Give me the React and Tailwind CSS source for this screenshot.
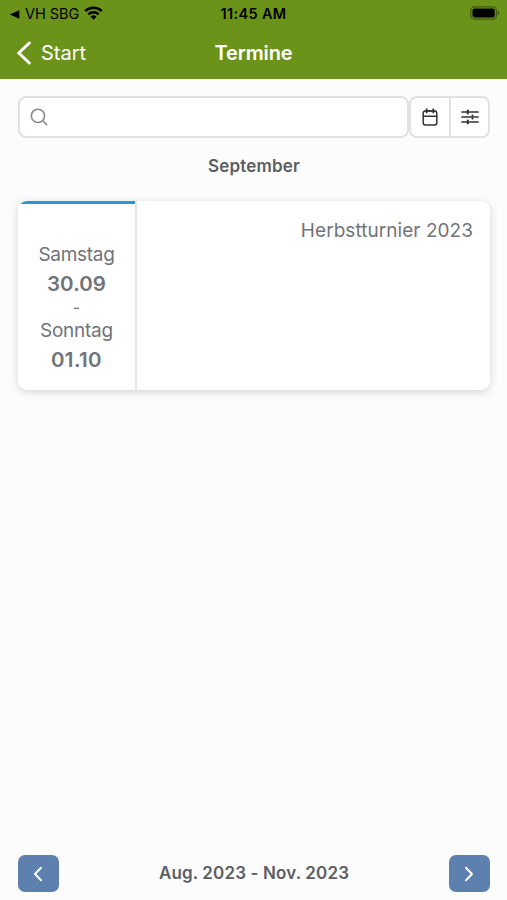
import React, { useState } from "react";

const events = [
  {
    title: "Herbstturnier 2023",
    startDay: "Samstag",
    startDate: "30.09",
    endDay: "Sonntag",
    endDate: "01.10",
  },
];

const StatusBar = () => (
  <div className="grid grid-cols-3 items-center h-7 pl-[9px] pr-[7px] text-sm text-black">
    <div className="flex items-center">
      <svg className="w-[11px] h-[9px]" viewBox="0 0 11 9" fill="currentColor">
        <path d="M10.3 0.3v8.4L0.8 4.5z" />
      </svg>
      <span className="ml-[5px] text-[14.5px] leading-5 tracking-[-0.05px] whitespace-nowrap">VH SBG</span>
      <svg className="ml-[5px] mb-[2px] w-[19px] h-[14px]" viewBox="0 0 19 14" fill="none" stroke="currentColor" strokeWidth="2.5">
        <path d="M1.2 5.2a12 12 0 0 1 16.6 0" />
        <path d="M4.3 8.4a7.5 7.5 0 0 1 10.4 0" />
        <path d="M9.5 13.8l-3-3.1a4.3 4.3 0 0 1 6 0z" fill="currentColor" stroke="none" />
      </svg>
    </div>
    <span className="pr-[2px] text-center text-[14.5px] font-semibold tracking-[0.35px]">11:45 AM</span>
    <svg className="justify-self-end mb-[2px] w-[30px] h-[14px]" viewBox="0 0 30 14">
      <rect x="0.8" y="0.8" width="25.6" height="12.4" rx="3.6" fill="none" stroke="#000" strokeOpacity="0.4" strokeWidth="1.2" />
      <rect x="2.5" y="2.5" width="22.2" height="9" rx="2" fill="#000" />
      <path d="M27.6 4.6c2 0.7 2 4.1 0 4.8z" fill="#000" fillOpacity="0.45" />
    </svg>
  </div>
);

const Header = () => (
  <header className="h-[79px] shrink-0 bg-[#6b931a]">
    <StatusBar />
    <nav className="grid grid-cols-3 items-center h-[49px] px-4 text-xl text-white">
      <button className="flex items-center">
        <svg className="w-4 h-6" viewBox="0 0 16 24" fill="none" stroke="currentColor" strokeWidth="3" strokeLinecap="round" strokeLinejoin="round">
          <path d="M13.3 2L2.8 12l10.5 10" />
        </svg>
        <span className="ml-[9px]">Start</span>
      </button>
      <h1 className="text-center font-semibold tracking-[-0.1px]">Termine</h1>
    </nav>
  </header>
);

const SearchBar = () => {
  const [query, setQuery] = useState("");

  return (
    <div className="flex h-[42px] text-[#303338]">
      <label className="flex flex-1 items-center rounded-lg border-2 border-[#e0e1e2] bg-white pl-[10px]">
        <svg className="w-5 h-5 text-[#898b8e]" viewBox="0 0 20 20" fill="none" stroke="currentColor" strokeWidth="1.7" strokeLinecap="round">
          <circle cx="8.4" cy="8.8" r="7" />
          <path d="M13.6 14l4 4" />
        </svg>
        <input
          className="w-full px-2 outline-none"
          value={query}
          onChange={(e) => setQuery(e.target.value)}
        />
      </label>
      <div className="flex w-[81px] rounded-lg border-2 border-[#e0e1e2] bg-white">
        <button className="flex flex-1 items-center justify-center border-r-2 border-[#e0e1e2] pr-px">
          <svg className="w-4 h-[18px]" viewBox="0 0 16 18" fill="none" stroke="currentColor" strokeWidth="1.5" strokeLinecap="round">
            <rect x="1.2" y="3" width="13.6" height="14" rx="2.2" />
            <path d="M1.2 8.3h13.6M3 3h10" />
            <path d="M4.7 1.2v3.2M11.3 1.2v3.2" strokeWidth="1.8" />
          </svg>
        </button>
        <button className="flex flex-1 items-center justify-center">
          <svg className="w-[18px] h-4" viewBox="0 0 18 16" fill="none" stroke="currentColor" strokeWidth="1.7" strokeLinecap="round">
            <path d="M1 3h5M8.5 3h8.5M1 8h9M13.5 8h3.5M1 13h5M8.5 13h8.5" />
            <path d="M6.8 1.6v2.8M11.5 6.6v2.8M6.8 11.6v2.8" strokeWidth="2.1" />
          </svg>
        </button>
      </div>
    </div>
  );
};

const EventCard = ({ event }) => (
  <article className="flex h-[189px] overflow-hidden rounded-[9px] bg-white text-[#707378] shadow-[0_2px_9px_rgba(0,0,0,0.16)]">
    <div className="flex w-[119px] flex-col items-center border-r-2 border-[#e4e5e6]">
      {/* Category colour */}
      <div className="h-[3px] w-full shrink-0 bg-[#2598d5]"></div>
      <span className="mt-9 text-[19px] leading-[30px] tracking-[-0.3px]">{event.startDay}</span>
      <span className="text-[20.5px] font-semibold leading-7 tracking-[0.1px]">{event.startDate}</span>
      <span className="text-base leading-[19px]">-</span>
      <span className="text-[19px] leading-[28px] tracking-[-0.25px]">{event.endDay}</span>
      <span className="text-[20.5px] font-semibold leading-[30px] tracking-[0.4px]">{event.endDate}</span>
    </div>
    <h3 className="flex-1 pt-[15px] pr-[17px] text-right text-[19px] leading-[29px] tracking-[0.05px]">{event.title}</h3>
  </article>
);

const App = () => {
  return (
    <div className="flex h-screen flex-col bg-[#fcfcfc] font-['Inter',sans-serif]">
      <Header />

      <main className="flex-1 pl-[18px] pr-[17px] pt-[17px]">
        <SearchBar />
        <h2 className="mt-[14px] text-center text-[17px] font-semibold leading-7 tracking-[0.2px] text-[#5b5e63]">September</h2>
        <div className="mt-[21px]">
          {events.map((event) => (
            <EventCard key={event.title} event={event} />
          ))}
        </div>
      </main>

      {/* Date range */}
      <footer className="flex items-center justify-between pl-[18px] pr-[17px] pb-2">
        <button className="flex h-[37px] w-[41px] items-center justify-center rounded-[7px] bg-[#5d80af] pr-px text-white">
          <svg className="w-[10px] h-4" viewBox="0 0 10 16" fill="none" stroke="currentColor" strokeWidth="2" strokeLinecap="round" strokeLinejoin="round">
            <path d="M8 1.8L2 8l6 6.2" />
          </svg>
        </button>
        <span className="pt-px text-[17px] font-semibold tracking-[0.14px] text-[#5b5e63]">Aug. 2023 - Nov. 2023</span>
        <button className="flex h-[37px] w-[41px] items-center justify-center rounded-[7px] bg-[#5d80af] text-white">
          <svg className="w-[10px] h-4" viewBox="0 0 10 16" fill="none" stroke="currentColor" strokeWidth="2" strokeLinecap="round" strokeLinejoin="round">
            <path d="M2 1.8L8 8l-6 6.2" />
          </svg>
        </button>
      </footer>
    </div>
  );
};

export default App;
